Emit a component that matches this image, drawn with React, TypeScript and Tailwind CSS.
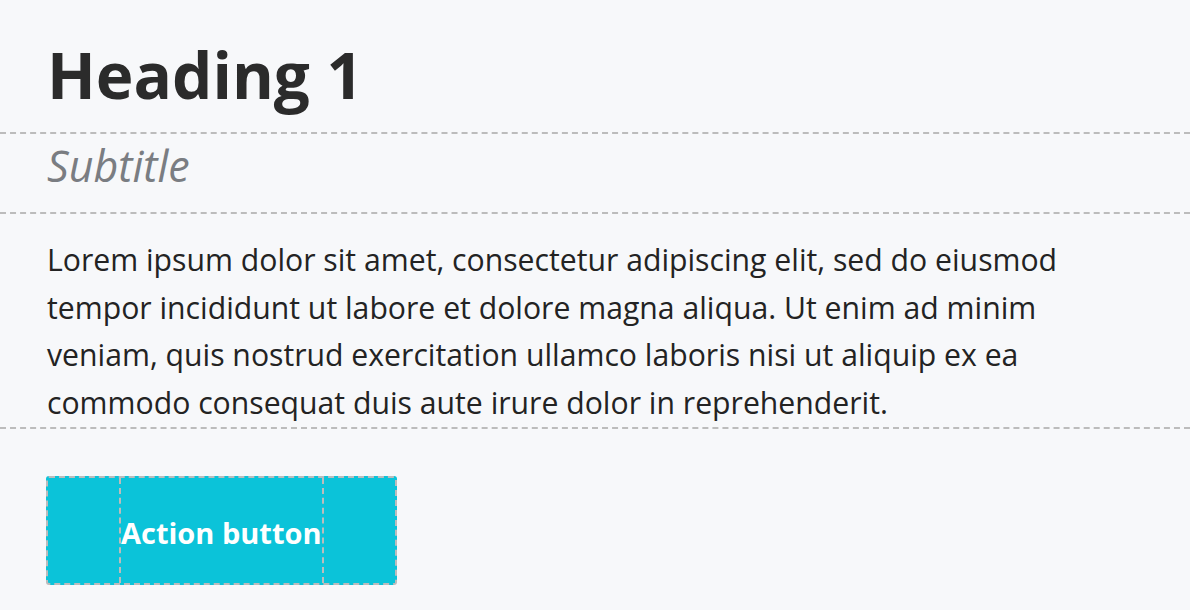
import React from "react";

export default function App() {
  return (
    <div className="min-h-[610px] w-full bg-[#f7f8fa] font-['Open_Sans','Noto_Sans',sans-serif] text-[#262626]">
      <div className="border-b-2 border-dashed border-[#bcbcbc] px-[47px] pt-[43px] pb-[25px]">
        <h1 className="text-[63.8px] font-bold leading-[64px] text-[#2b2b2b]">Heading 1</h1>
      </div>
      <div className="border-b-2 border-dashed border-[#bcbcbc] px-[47px] pt-[10px] pb-[25px]">
        <p className="text-[43px] italic leading-[43px] text-[#7a7d82]">Subtitle</p>
      </div>
      <div className="border-b-2 border-dashed border-[#bcbcbc] pl-[47px] pr-[60px] pt-[22px] pb-px">
        <p className="text-[30.2px] leading-[47.5px] text-[#232323]">
          Lorem ipsum dolor sit amet, consectetur adipiscing elit, sed do eiusmod tempor incididunt ut labore et dolore magna aliqua. Ut enim ad minim veniam, quis nostrud exercitation ullamco laboris nisi ut aliquip ex ea commodo consequat duis aute irure dolor in reprehenderit.
        </p>
      </div>
      <div className="px-[46px] pt-[47px]">
        <button className="flex h-[109px] items-stretch rounded-[3px] border-2 border-dashed border-[#bcbcbc] bg-[#0bc3d9] px-[71px]">
          <span className="flex items-center border-x-2 border-dashed border-[#bcbcbc] pt-[4px] text-[29px] font-bold leading-none text-white">
            Action button
          </span>
        </button>
      </div>
    </div>
  );
}
